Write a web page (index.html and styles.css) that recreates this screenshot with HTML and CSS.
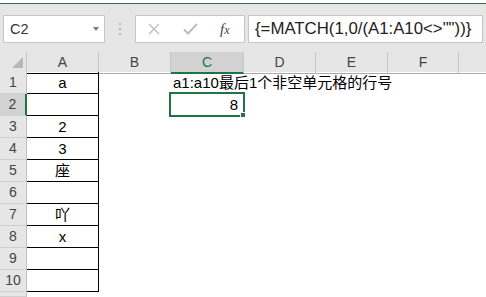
FILE: index.html
```html
<!DOCTYPE html>
<html lang="zh">
<head>
    <meta charset="UTF-8">
    <title>MATCH</title>
    <link rel="stylesheet" href="styles.css">
</head>
<body>
    <div class="topline"></div>

    <div class="fbar">
        <div class="namebox"><span>C2</span><span class="caret"></span></div>
        <div class="grip"><i></i><i></i><i></i></div>
        <div class="fnbtns">
            <svg class="ic-x" width="12" height="12" viewBox="0 0 12 12"><path d="M1 1L11 11M11 1L1 11" stroke="#bdbdbd" stroke-width="1.4" fill="none"/></svg>
            <svg class="ic-ok" width="15" height="12" viewBox="0 0 15 12"><path d="M1 6.5L5 10.5L14 1" stroke="#bdbdbd" stroke-width="2" fill="none"/></svg>
            <span class="fx"><i>f</i><i class="sub">x</i></span>
        </div>
        <div class="formula">{=MATCH(1,0/(A1:A10&lt;&gt;""))}</div>
    </div>

    <div class="sheet">
        <div class="row head">
            <div class="c corner"><svg width="26" height="19" viewBox="0 0 26 19"><polygon points="23,5 23,16 12,16" fill="#b7b7b7"/></svg></div>
            <div class="c ca">A</div>
            <div class="c">B</div>
            <div class="c on">C</div>
            <div class="c">D</div>
            <div class="c">E</div>
            <div class="c">F</div>
            <div class="c last"></div>
        </div>
        <div class="row">
            <div class="rh">1</div><div class="a">a</div><div></div>
            <div class="cell note">a1:a10最后1个非空单元格的行号</div>
        </div>
        <div class="row">
            <div class="rh on">2</div><div class="a"></div><div></div>
            <div class="cell num sel">8<span class="handle"></span></div>
        </div>
        <div class="row"><div class="rh">3</div><div class="a">2</div></div>
        <div class="row"><div class="rh">4</div><div class="a">3</div></div>
        <div class="row"><div class="rh">5</div><div class="a">座</div></div>
        <div class="row"><div class="rh">6</div><div class="a"></div></div>
        <div class="row"><div class="rh">7</div><div class="a">吖</div></div>
        <div class="row"><div class="rh">8</div><div class="a">x</div></div>
        <div class="row"><div class="rh">9</div><div class="a"></div></div>
        <div class="row"><div class="rh">10</div><div class="a"></div></div>
        <div class="row tail"><div class="rh"></div></div>
    </div>
</body>
</html>
```

FILE: styles.css
```css
body {
    margin: 0;
    width: 486px;
    height: 297px;
    overflow: hidden;
    background: #fff;
    font-family: 'Liberation Sans', 'Noto Sans CJK SC', sans-serif;
    color: #000;
}
* { box-sizing: border-box; }

.topline {
    height: 4px;
    background: #fff;
    border-bottom: 1px solid #217346;
}

/* formula bar */
.fbar {
    height: 48px;
    background: #e6e6e6;
    display: flex;
    align-items: flex-start;
    padding: 11px 0 0 3px;
}
.namebox {
    width: 102px;
    height: 28px;
    border: 1px solid #c6c6c6;
    background: #fff;
    display: flex;
    align-items: center;
    justify-content: space-between;
    padding: 0 5px 0 6px;
    font-size: 14.5px;
    color: #333;
}
.caret {
    width: 0;
    height: 0;
    border-left: 3.5px solid transparent;
    border-right: 3.5px solid transparent;
    border-top: 4px solid #7a7a7a;
}
.grip {
    width: 30px;
    display: flex;
    flex-direction: column;
    align-items: center;
    gap: 3px;
    padding-top: 8px;
}
.grip i {
    display: block;
    width: 2px;
    height: 2px;
    background: #b9b9b9;
}
.fnbtns {
    width: 110px;
    height: 28px;
    border: 1px solid #c6c6c6;
    background: #fff;
    display: flex;
    align-items: center;
}
.ic-x { margin-left: 12px; }
.ic-ok { margin-left: 23px; }
.fx {
    margin-left: 22px;
    font-family: 'Liberation Serif', serif;
    font-size: 15px;
    color: #444;
}
.fx .sub { font-size: 12px; }
.formula {
    margin-left: 3px;
    width: 235px;
    height: 28px;
    border: 1px solid #c6c6c6;
    background: #fff;
    padding-left: 6px;
    font-size: 16.8px;
    line-height: 26px;
    color: #222;
    white-space: nowrap;
    overflow: hidden;
}

/* sheet */
.row {
    display: grid;
    grid-template-columns: 27px 72px 72px 73px 72px 72px 71px 1fr;
    height: 22px;
    line-height: 21px;
}
.row.tail { height: 5px; }
.head {
    height: 20px;
    background: #e6e6e6;
}
.head .c {
    border-right: 1px solid #c6c6c6;
    border-bottom: 1px solid #ababab;
    text-align: center;
    font-size: 14px;
    color: #444;
    line-height: 20px;
}
.head .ca { border-bottom-color: #000; }
.head .on {
    background: #d2d2d2;
    border-bottom: 2px solid #217346;
    color: #217346;
}
.head .last { border-right: none; }
.corner svg { display: block; }

.rh {
    background: #e6e6e6;
    border-right: 1px solid #c0c0c0;
    border-bottom: 1px solid #d0d0d0;
    text-align: center;
    font-size: 14px;
    color: #444;
}
.rh.on {
    background: #d2d2d2;
    border-right: 2px solid #217346;
}
.a {
    border-right: 1px solid #000;
    border-bottom: 1px solid #000;
    text-align: center;
    font-size: 15px;
}
.cell {
    font-size: 15px;
    white-space: nowrap;
}
.note {
    padding-left: 2px;
    overflow: visible;
}
.num {
    text-align: right;
    padding-right: 6px;
}
.sel { position: relative; }
.sel::after {
    content: '';
    position: absolute;
    left: -2px;
    top: -2px;
    right: -1px;
    bottom: -1px;
    border: 2px solid #217346;
}
.handle {
    position: absolute;
    right: -2px;
    bottom: -2px;
    width: 6px;
    height: 6px;
    background: #217346;
    border: 1px solid #fff;
    z-index: 1;
}
```
